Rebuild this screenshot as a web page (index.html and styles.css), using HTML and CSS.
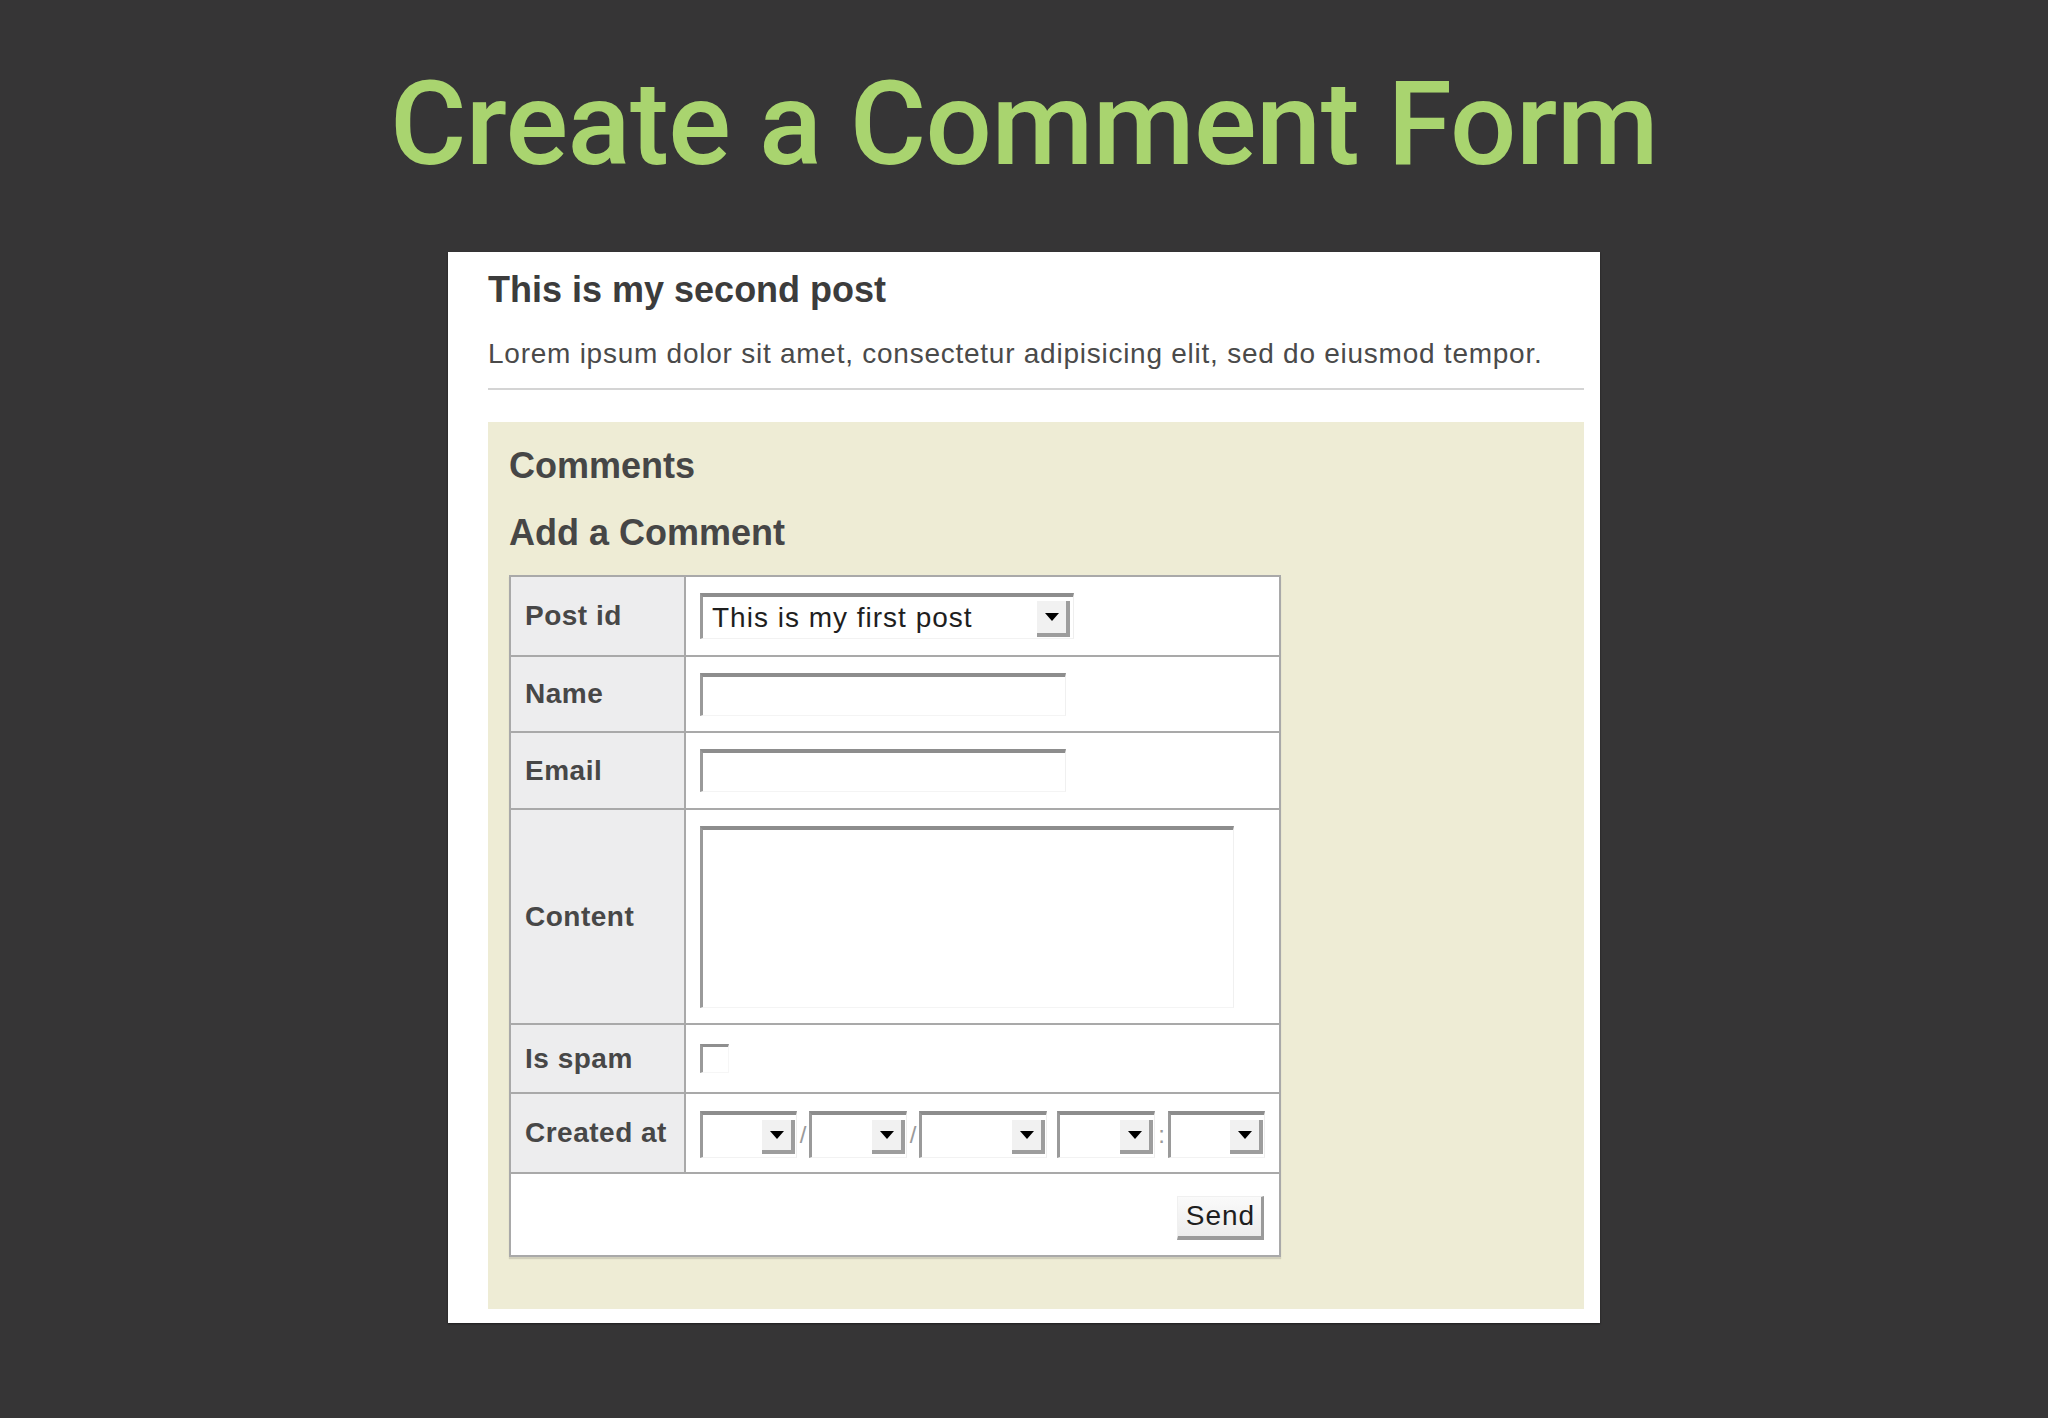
FILE: index.html
```html
<!DOCTYPE html>
<html lang="en">
<head>
<meta charset="utf-8">
<title>Create a Comment Form</title>
<link rel="stylesheet" href="styles.css">
</head>
<body>
<h1 class="slide-title">Create a Comment Form</h1>
<div class="card">
  <h2 class="post-title">This is my second post</h2>
  <p class="post-body">Lorem ipsum dolor sit amet, consectetur adipisicing elit, sed do eiusmod tempor.</p>
  <hr class="divider">
  <section class="comments">
    <h3 class="section-title">Comments</h3>
    <h3 class="section-title add-title">Add a Comment</h3>
    <form class="comment-form">
      <div class="label">Post id</div>
      <div class="field">
        <div class="select-box post-select">
          <select class="select-native"><option>This is my first post</option></select>
          <span class="arrow"><span class="tri"></span></span>
        </div>
      </div>

      <div class="label">Name</div>
      <div class="field"><input class="text-input" type="text"></div>

      <div class="label">Email</div>
      <div class="field"><input class="text-input" type="text"></div>

      <div class="label">Content</div>
      <div class="field"><textarea class="text-area"></textarea></div>

      <div class="label">Is spam</div>
      <div class="field"><span class="checkbox"></span></div>

      <div class="label">Created at</div>
      <div class="field date-field">
        <div class="select-box date-select w97"><select class="select-native"><option></option></select><span class="arrow"><span class="tri"></span></span></div>
        <span class="sep">/</span>
        <div class="select-box date-select w98"><select class="select-native"><option></option></select><span class="arrow"><span class="tri"></span></span></div>
        <span class="sep">/</span>
        <div class="select-box date-select w128"><select class="select-native"><option></option></select><span class="arrow"><span class="tri"></span></span></div>
        <span class="space"></span>
        <div class="select-box date-select w98"><select class="select-native"><option></option></select><span class="arrow"><span class="tri"></span></span></div>
        <span class="sep colon">:</span>
        <div class="select-box date-select w97"><select class="select-native"><option></option></select><span class="arrow"><span class="tri"></span></span></div>
      </div>

      <div class="actions"><button class="send-btn" type="button">Send</button></div>
    </form>
  </section>
</div>
</body>
</html>
```

FILE: styles.css
```css
html, body {
  margin: 0;
  padding: 0;
}
body {
  background: #363536;
  width: 2048px;
  height: 1418px;
  overflow: hidden;
  font-family: "Liberation Sans", Arial, sans-serif;
}
.slide-title {
  margin: 0 0 59px 0;
  padding-top: 56px;
  text-align: center;
  font-family: Roboto, "Liberation Sans", sans-serif;
  font-weight: 500;
  font-size: 117px;
  line-height: 137px;
  letter-spacing: -0.6px;
  color: #a9d46f;
}
.card {
  width: 1152px;
  box-sizing: border-box;
  margin: 0 auto;
  background: #ffffff;
  padding: 17px 16px 14px 40px;
  box-shadow: 0 1px 2px rgba(0,0,0,0.45);
}
.post-title {
  margin: 0;
  font-size: 36px;
  line-height: 41px;
  font-weight: bold;
  color: #3c3c3c;
}
.post-body {
  margin: 28px 0 0 0;
  font-size: 28px;
  line-height: 32px;
  letter-spacing: 0.75px;
  color: #4a4a4a;
}
.divider {
  margin: 18px 0 0 0;
  border: 0;
  height: 2px;
  background: #d4d4d4;
}
.comments {
  margin-top: 32px;
  background: #eeecd5;
  padding: 23px 21px 52px 21px;
}
.section-title {
  margin: 0;
  font-size: 36px;
  line-height: 41px;
  font-weight: bold;
  color: #464646;
}
.add-title {
  margin-top: 26px;
}
.comment-form {
  margin-top: 22px;
  width: 772px;
  box-sizing: border-box;
  display: grid;
  grid-template-columns: 173px 1fr;
  grid-template-rows: 78px 74px 75px 213px 67px 78px 81px;
  gap: 2px;
  padding: 2px;
  background: #a9a9a9;
  box-shadow: 0 2px 1px rgba(0,0,0,0.12);
}
.label {
  background: #ededee;
  display: flex;
  align-items: center;
  padding-left: 14px;
  font-size: 28px;
  font-weight: bold;
  letter-spacing: 0.5px;
  color: #474747;
}
.field {
  background: #ffffff;
  display: flex;
  align-items: center;
  padding-left: 14px;
}
.select-box {
  display: flex;
  box-sizing: border-box;
  background: #ffffff;
  border-top: 4px solid #8d8d8d;
  border-left: 3px solid #9a9a9a;
  border-right: 1px solid #eeeeee;
  border-bottom: 1px solid #f2f2f2;
}
.post-select {
  width: 374px;
  height: 46px;
}
.select-native {
  appearance: none;
  -webkit-appearance: none;
  flex: 1;
  min-width: 0;
  border: 0;
  outline: 0;
  background: transparent;
  margin: 0;
  padding: 0 0 0 9px;
  font-family: "Liberation Sans", Arial, sans-serif;
  font-size: 28px;
  letter-spacing: 1px;
  color: #1e1e1e;
}
.arrow {
  align-self: flex-end;
  box-sizing: border-box;
  width: 33px;
  height: 36px;
  margin: 0 3px 1px 0;
  background: #f1f1f1;
  border-right: 4px solid #9d9d9d;
  border-bottom: 4px solid #9d9d9d;
  display: flex;
  align-items: center;
  justify-content: center;
}
.tri {
  width: 0;
  height: 0;
  border-left: 7px solid transparent;
  border-right: 7px solid transparent;
  border-top: 8px solid #000000;
}
.date-field {
  padding-top: 3px;
}
.date-select {
  height: 47px;
}
.date-select .arrow {
  height: 34px;
  margin: 0 1px 3px 0;
}
.w97 { width: 97px; }
.w98 { width: 98px; }
.w128 { width: 128px; }
.sep {
  width: 12px;
  text-align: center;
  font-size: 24px;
  color: #9a9a9a;
  line-height: 30px;
  align-self: center;
}
.colon {
  width: 13px;
}
.space {
  width: 10px;
}
.text-input {
  width: 366px;
  height: 43px;
  box-sizing: border-box;
  margin: 0;
  padding: 0 8px;
  border-top: 4px solid #8d8d8d;
  border-left: 3px solid #9a9a9a;
  border-right: 1px solid #f0f0f0;
  border-bottom: 1px solid #f4f4f4;
  outline: 0;
  background: #ffffff;
  font-family: "Liberation Sans", Arial, sans-serif;
  font-size: 26px;
}
.text-area {
  width: 534px;
  height: 182px;
  box-sizing: border-box;
  margin: 0;
  padding: 6px 8px;
  resize: none;
  border-top: 4px solid #8d8d8d;
  border-left: 3px solid #9a9a9a;
  border-right: 1px solid #f0f0f0;
  border-bottom: 1px solid #f4f4f4;
  outline: 0;
  background: #ffffff;
  font-family: "Liberation Sans", Arial, sans-serif;
  font-size: 26px;
}
.checkbox {
  display: block;
  width: 29px;
  height: 29px;
  box-sizing: border-box;
  border-top: 3px solid #8f8f8f;
  border-left: 3px solid #9a9a9a;
  border-right: 1px solid #f6f6f6;
  border-bottom: 1px solid #f6f6f6;
  background: #ffffff;
}
.actions {
  grid-column: 1 / span 2;
  background: #ffffff;
  display: flex;
  align-items: center;
  justify-content: flex-end;
  padding: 6px 15px 0 0;
}
.send-btn {
  width: 87px;
  height: 44px;
  box-sizing: border-box;
  margin: 0;
  padding: 0 0 0 2px;
  background: linear-gradient(#fafafa, #ececec);
  border-top: 1px solid #f0f0f0;
  border-left: 1px solid #f0f0f0;
  border-right: 3px solid #9a9a9a;
  border-bottom: 4px solid #9a9a9a;
  font-family: "Liberation Sans", Arial, sans-serif;
  font-size: 28px;
  letter-spacing: 1px;
  color: #1e1e1e;
  line-height: 36px;
}
```
